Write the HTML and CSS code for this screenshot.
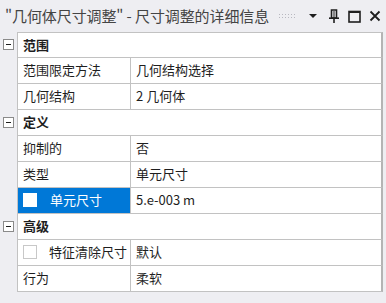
FILE: index.html
```html
<!DOCTYPE html>
<html lang="zh">
<head>
<meta charset="utf-8">
<link rel="stylesheet" href="styles.css">
</head>
<body>
<div class="titlebar">
  <span class="title">"几何体尺寸调整" - 尺寸调整的详细信息</span>
  <span class="grip"></span>
  <svg class="ico" width="10" height="8" viewBox="0 0 10 8"><path d="M1 2h8L5 6z" fill="#1e1e1e"/></svg>
  <svg class="ico pin" width="12" height="14" viewBox="0 0 12 14"><path d="M3.5 1h5v8h-5z" fill="none" stroke="#1e1e1e" stroke-width="1.6"/><path d="M6 2v7" stroke="#1e1e1e" stroke-width="1"/><path d="M1 9.2h10" stroke="#1e1e1e" stroke-width="1.6"/><path d="M6 9v5" stroke="#1e1e1e" stroke-width="1.6"/></svg>
  <svg class="ico" width="13" height="13" viewBox="0 0 13 13"><rect x="1" y="1.5" width="11" height="10.5" fill="none" stroke="#1e1e1e" stroke-width="1.6"/><path d="M1 2h11" stroke="#1e1e1e" stroke-width="2"/></svg>
  <svg class="ico" width="12" height="12" viewBox="0 0 12 12"><path d="M1.5 1.5l9 9M10.5 1.5l-9 9" stroke="#1e1e1e" stroke-width="1.8"/></svg>
</div>
<div class="grid">
  <div class="row sec"><div class="gut"><span class="tog"></span></div><div class="cell full">范围</div></div>
  <div class="row"><div class="gut"></div><div class="cell name">范围限定方法</div><div class="cell val">几何结构选择</div></div>
  <div class="row"><div class="gut"></div><div class="cell name">几何结构</div><div class="cell val">2 几何体</div></div>
  <div class="row sec"><div class="gut"><span class="tog"></span></div><div class="cell full">定义</div></div>
  <div class="row"><div class="gut"></div><div class="cell name">抑制的</div><div class="cell val">否</div></div>
  <div class="row"><div class="gut"></div><div class="cell name">类型</div><div class="cell val">单元尺寸</div></div>
  <div class="row"><div class="gut"></div><div class="cell name sel"><span class="cb"></span>单元尺寸</div><div class="cell val">5.e-003 m</div></div>
  <div class="row sec"><div class="gut"><span class="tog"></span></div><div class="cell full">高级</div></div>
  <div class="row"><div class="gut"></div><div class="cell name chk"><span class="cb gray"></span>特征清除尺寸</div><div class="cell val">默认</div></div>
  <div class="row"><div class="gut"></div><div class="cell name">行为</div><div class="cell val">柔软</div></div>
</div>
</body>
</html>
```
FILE: styles.css
```css
html, body {
  margin: 0;
  padding: 0;
  background: #eeeef2;
  width: 386px;
  height: 303px;
  overflow: hidden;
  font-family: "Noto Sans CJK SC", "Noto Sans", sans-serif;
}
.titlebar {
  height: 32px;
  display: flex;
  align-items: center;
  padding-left: 5px;
  color: #444444;
}
.title {
  font-size: 15px;
  white-space: nowrap;
  letter-spacing: -0.1px;
  margin-top: -1px;
}
.grip {
  width: 19px;
  height: 6px;
  margin-left: 9px;
  margin-right: 3px;
  background-image: radial-gradient(circle, #b8b8c0 0.8px, transparent 1px);
  background-size: 3px 3px;
}
.ico { display: block; margin-left: 8px; }
.pin { margin-left: 10px; }
.grid {
  display: flex;
  flex-direction: column;
  font-size: 13px;
  color: #1e1e1e;
}
.row {
  display: flex;
  height: 26px;
}
.gut {
  width: 17px;
  flex: none;
  display: flex;
  align-items: center;
  justify-content: center;
  padding-bottom: 2px;
  box-sizing: border-box;
}
.tog {
  width: 9px;
  height: 9px;
  border: 1px solid #8a8a8a;
  background: #fff;
  position: relative;
  margin-left: -1px;
}
.tog::after {
  content: "";
  position: absolute;
  left: 2px;
  top: 4px;
  width: 5px;
  height: 1px;
  background: #1e1e1e;
}
.cell {
  display: flex;
  align-items: center;
  background: #fff;
  border-bottom: 1px solid #c2c2c2;
  padding-left: 5px;
  padding-bottom: 2px;
  white-space: nowrap;
  box-sizing: border-box;
}
.row:first-child .cell { border-top: 1px solid #c2c2c2; }
.row:first-child { height: 26px; }
.full {
  flex: 1;
  margin-right: 3px;
  border-left: 1px solid #c2c2c2;
  border-right: 2px solid #b4b4b4;
  font-weight: bold;
}
.name {
  width: 114px;
  flex: none;
  border-left: 1px solid #c2c2c2;
  border-right: 1px solid #c2c2c2;
}
.val {
  flex: 1;
  margin-right: 3px;
  border-right: 2px solid #b4b4b4;
}
.sel {
  background: #0078d7;
  color: #fff;
}
.cb {
  width: 12px;
  height: 12px;
  background: #fff;
  border: 1px solid #fff;
  margin-right: 13px;
  flex: none;
}
.cb.gray {
  border-color: #c8c8c8;
  margin-right: 12px;
}
.chk { padding-left: 5px; }
```
